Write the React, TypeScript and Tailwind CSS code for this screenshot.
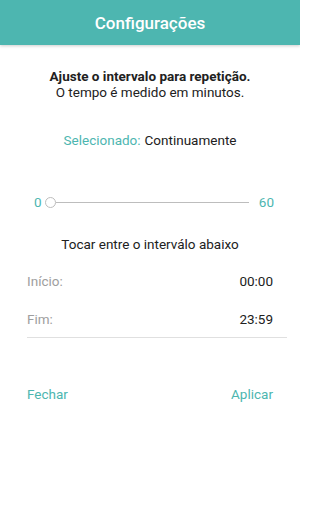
export default function App() {
  return (
    <div className="w-[300px] h-[512px] bg-white flex flex-col overflow-hidden font-['Roboto',sans-serif]">
      <div className="h-[45px] bg-[#4db6b0] shadow-[0_1px_3px_rgba(0,0,0,0.2)] flex items-center justify-center pt-[3px]">
        <span className="text-white text-[17px] font-medium">Configurações</span>
      </div>

      <div className="flex flex-col items-center pt-[23px] text-[13.5px] leading-[16px] text-[#212121]">
        <span className="font-bold">Ajuste o intervalo para repetição.</span>
        <span>O tempo é medido em minutos.</span>
      </div>

      <div className="flex justify-center pt-[32px] text-[13.5px] leading-[16px]">
        <span className="text-[#4db6b0]">Selecionado:</span>
        <span className="text-[#212121] ml-1">Continuamente</span>
      </div>

      <div className="flex items-center pt-[44px] pl-[34px] pr-[26px] text-[13.5px] text-[#4db6b0]">
        <span className="w-[11px]">0</span>
        <div className="flex-1 flex items-center">
          <div className="w-[11px] h-[11px] rounded-full border border-[#bdbdbd] bg-white" />
          <div className="flex-1 h-[1px] bg-[#bdbdbd]" />
        </div>
        <span className="ml-[10px]">60</span>
      </div>

      <div className="flex justify-center pt-[24px] text-[13.5px] leading-[16px] text-[#212121]">
        Tocar entre o interválo abaixo
      </div>

      <div className="pl-[27px] pr-[13px] flex flex-col text-[13.5px]">
        <div className="flex justify-between items-center h-[38px] mt-[10px] pr-[14px]">
          <span className="text-[#9e9e9e]">Início:</span>
          <span className="text-[#212121]">00:00</span>
        </div>
        <div className="flex justify-between items-center h-[38px] pr-[14px]">
          <span className="text-[#9e9e9e]">Fim:</span>
          <span className="text-[#212121]">23:59</span>
        </div>
        <div className="h-[1px] bg-[#e0e0e0] -mt-[1px]" />
      </div>

      <div className="flex justify-between px-[27px] pt-[46px] text-[13.5px] text-[#4db6b0]">
        <span>Fechar</span>
        <span>Aplicar</span>
      </div>
    </div>
  );
}
